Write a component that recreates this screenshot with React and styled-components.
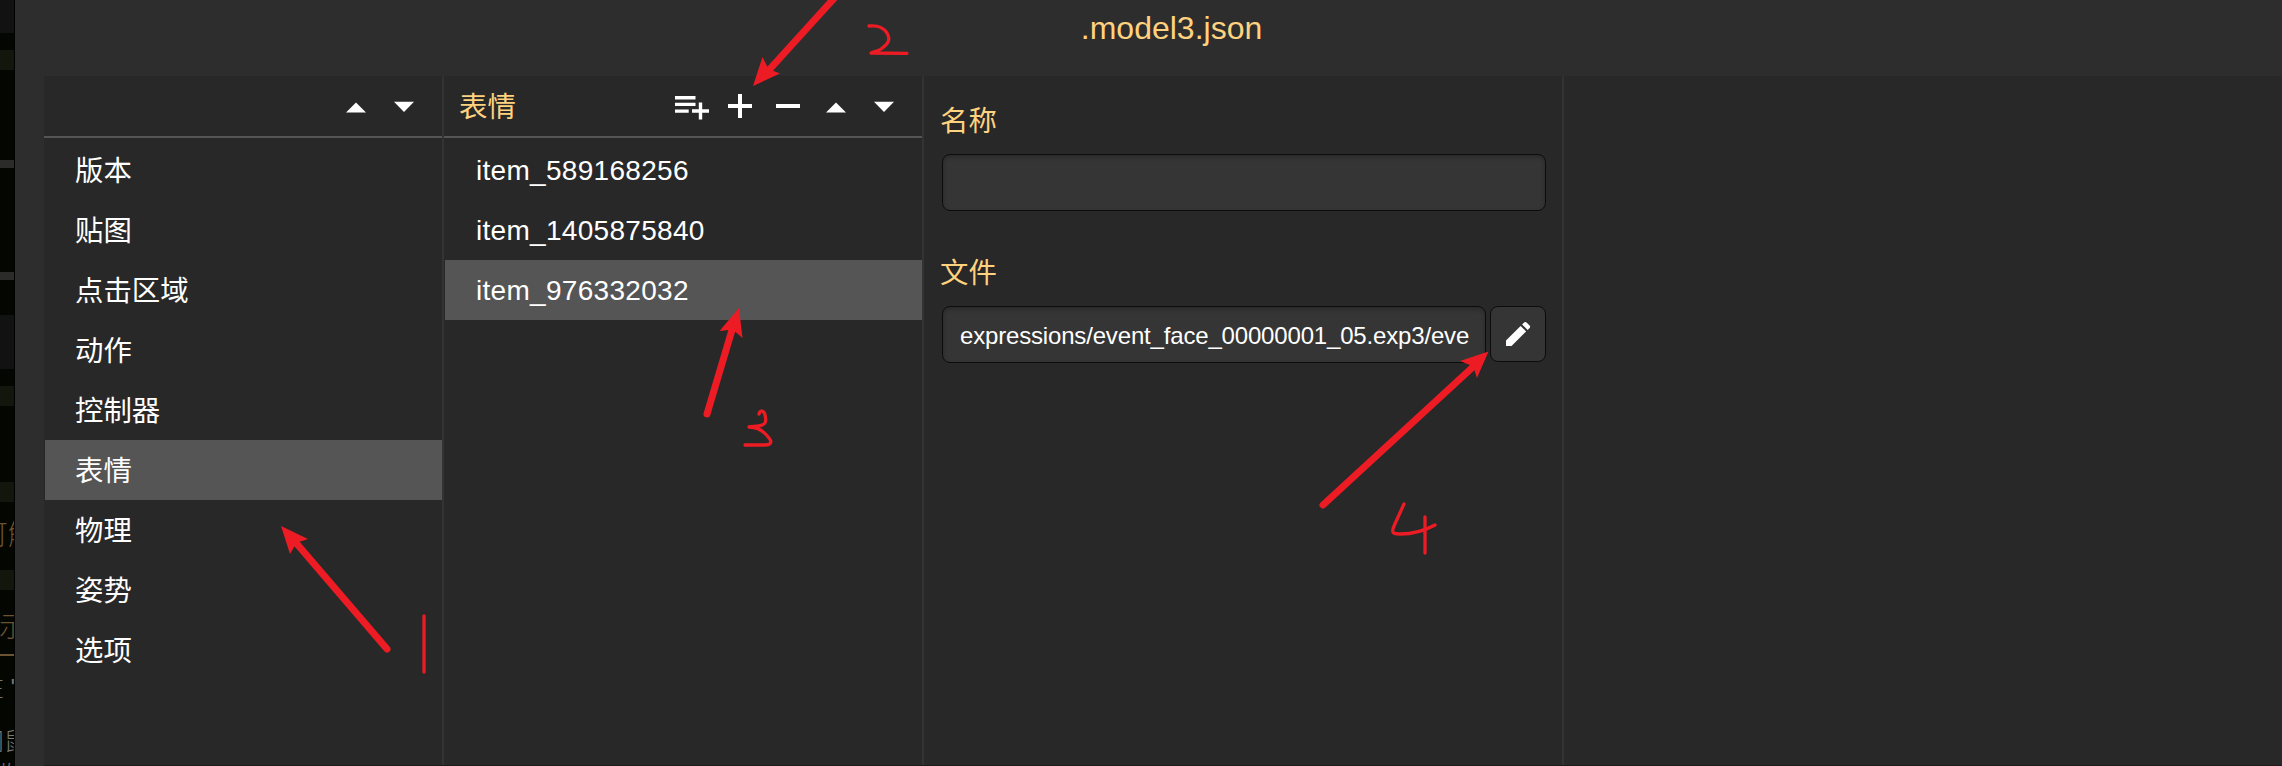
import React from "react";
import styled, { createGlobalStyle } from "styled-components";

const GlobalStyle = createGlobalStyle`
  *, *::before, *::after { box-sizing: border-box; }
  body {
    margin: 0;
    background: #040602;
    font-family: "Liberation Sans", "Noto Sans CJK SC", sans-serif;
    font-size: 28px;
    color: #fff;
  }
`;

const Screen = styled.div`
  position: relative;
  display: flex;
  height: 766px;
  overflow: hidden;
`;

const Backdrop = styled.div`
  flex: none;
  width: 15px;
  overflow: hidden;
  background: #040602;
  border-right: 1px solid #000;
`;

const Band = styled.div`
  height: ${(p) => p.$h}px;
  background: ${(p) => p.$bg || "transparent"};
`;

const Clipped = styled.div`
  height: ${(p) => p.$h}px;
  line-height: ${(p) => p.$h}px;
  margin-left: ${(p) => p.$shift}px;
  font-size: ${(p) => p.$size || 28}px;
  font-weight: 300;
  white-space: pre;
  color: ${(p) => p.$color};
`;

const Dialog = styled.div`
  flex: 1;
  min-width: 0;
  display: flex;
  flex-direction: column;
  background: #2d2d2d;
`;

const DialogTitle = styled.header`
  flex: none;
  height: 76px;
  padding-top: 10px;
  padding-left: 46px;
  line-height: 37px;
  font-size: 32px;
  text-align: center;
  color: #ffd27f;
`;

const Panels = styled.main`
  flex: 1;
  display: flex;
  margin-left: 29px;
  background: #282828;
  border-bottom: 1px solid #1f191b;
`;

const Column = styled.section`
  flex: none;
  width: ${(p) => p.$w}px;
  border-right: 2px solid #333;
`;

const ColumnHeader = styled.div`
  display: flex;
  align-items: center;
  height: 62px;
  padding: 0 14px 0 15px;
  border-bottom: 2px solid #555;
`;

const ColumnTitle = styled.div`
  flex: 1;
  padding-bottom: 4px;
  font-size: 28.4px;
  color: #ffd27f;
`;

const ToolButton = styled.button`
  display: block;
  width: 48px;
  height: 48px;
  padding: 0;
  border: 0;
  background: none;
  color: #fff;
  svg { display: block; }
`;

const List = styled.ul`
  list-style: none;
  margin: 0;
  padding: 2px 0 0 1px;
`;

const Row = styled.li`
  height: 60px;
  padding-left: ${(p) => (p.$latin ? 31 : 30)}px;
  padding-top: 1px;
  line-height: 60px;
  font-size: ${(p) => (p.$latin ? 28 : 28.4)}px;
  letter-spacing: ${(p) => (p.$latin ? 0.3 : 0)}px;
  background: ${(p) => (p.$active ? "#555" : "transparent")};
`;

const Form = styled.div`
  padding: 24px 16px 0 18px;
`;

const Label = styled.label`
  display: block;
  height: 40px;
  padding-top: 1px;
  line-height: 40px;
  margin: 0 0 14px -2px;
  font-size: 28.4px;
  color: #ffd27f;
`;

const Field = styled.div`
  display: flex;
  align-items: flex-start;
  gap: 4px;
  margin-bottom: 41px;
`;

const Input = styled.input`
  flex: 1;
  min-width: 0;
  height: 57px;
  padding: 2px 16px 0 17px;
  border: 1px solid #0c0c0c;
  border-radius: 8px;
  background: #353535;
  box-shadow: inset 0 2px 4px rgba(0, 0, 0, 0.25);
  font: 24px "Liberation Sans", sans-serif;
  letter-spacing: -0.17px;
  color: #fff;
  outline: none;
`;

const EditButton = styled.button`
  display: grid;
  place-items: center;
  width: 56px;
  height: 56px;
  padding: 0;
  border: 1px solid #0c0c0c;
  border-radius: 8px;
  background: #353535;
  color: #fff;
`;

const Annotations = styled.svg`
  position: absolute;
  inset: 0;
  pointer-events: none;
`;

const ICONS = {
  addList: "M7 14h20.5v3.4H7zM7 20.7h20.5v3.4H7zM7 27.4h13.7v3.4H7zM30.8 20.4h3.4v6.9H41v3.4h-6.8v6.7h-3.4v-6.7H24v-3.4h6.8z",
  add: "M22 12h4v10h10v4H26v10h-4V26H12v-4h10z",
  remove: "M12 22h24v4H12z",
  up: "M14 30.5L24 20.5L34 30.5z",
  down: "M14 19.8H34L24 30z",
};

function Tool({ name, label }) {
  return (
    <ToolButton aria-label={label}>
      <svg width="48" height="48" viewBox="0 0 48 48" fill="currentColor">
        <path d={ICONS[name]} />
      </svg>
    </ToolButton>
  );
}

const CATEGORIES = ["版本", "贴图", "点击区域", "动作", "控制器", "表情", "物理", "姿势", "选项"];
const ITEMS = ["item_589168256", "item_1405875840", "item_976332032"];

export default function App() {
  return (
    <>
      <GlobalStyle />
      <Screen>
        <Backdrop>
          <Band $h={33} $bg="#121212" />
          <Band $h={17} />
          <Band $h={20} $bg="#12160c" />
          <Band $h={90} />
          <Band $h={8} $bg="#2b2b29" />
          <Band $h={104} />
          <Band $h={8} $bg="#2b2b29" />
          <Band $h={35} />
          <Band $h={54} $bg="#121212" />
          <Band $h={17} />
          <Band $h={20} $bg="#12160c" />
          <Band $h={76} />
          <Band $h={20} $bg="#12160c" />
          <Band $h={14} />
          <Clipped $h={40} $shift={-20} $color="#6b5231">可解</Clipped>
          <Band $h={14} />
          <Band $h={20} $bg="#12160c" />
          <Band $h={18} />
          <Clipped $h={40} $shift={-1} $color="#6b5231">示</Clipped>
          <Band $h={6} />
          <Band $h={2} $bg="#6b5231" />
          <Band $h={14} />
          <Clipped $h={36} $size={24} $shift={-20} $color="#777">在 "</Clipped>
          <Band $h={18} />
          <Clipped $h={36} $size={24} $shift={-20} $color="#777">间鼠</Clipped>
          <Clipped $h={30} $size={24} $shift={-5} $color="#777">收</Clipped>
        </Backdrop>

        <Dialog>
          <DialogTitle>.model3.json</DialogTitle>
          <Panels>
            <Column $w={400}>
              <ColumnHeader>
                <ColumnTitle />
                <Tool name="up" label="上移" />
                <Tool name="down" label="下移" />
              </ColumnHeader>
              <List>
                {CATEGORIES.map((c) => (
                  <Row key={c} $active={c === "表情"}>{c}</Row>
                ))}
              </List>
            </Column>

            <Column $w={480}>
              <ColumnHeader>
                <ColumnTitle>表情</ColumnTitle>
                <Tool name="addList" label="批量添加" />
                <Tool name="add" label="添加" />
                <Tool name="remove" label="删除" />
                <Tool name="up" label="上移" />
                <Tool name="down" label="下移" />
              </ColumnHeader>
              <List>
                {ITEMS.map((c, i) => (
                  <Row key={c} $active={i === 2} $latin>{c}</Row>
                ))}
              </List>
            </Column>

            <Column $w={640}>
              <Form>
                <Label>名称</Label>
                <Field>
                  <Input readOnly value="" />
                </Field>
                <Label>文件</Label>
                <Field>
                  <Input readOnly value="expressions/event_face_00000001_05.exp3/eve" />
                  <EditButton aria-label="编辑">
                    <svg width="32" height="32" viewBox="0 0 32 32" fill="currentColor">
                      <path d="M4 28v-5.500L18.600 7.900l5.500 5.500L9.500 28zM20.100 6.400l2-2c.7-.7 1.700-.7 2.400 0l3.100 3.100c.7.7.7 1.700 0 2.400l-2 2z" />
                    </svg>
                  </EditButton>
                </Field>
              </Form>
            </Column>
          </Panels>
        </Dialog>

        <Annotations width="2282" height="766" viewBox="0 0 2282 766" fill="none" stroke="#ed1c24" strokeLinecap="round" strokeLinejoin="round">
          <g strokeWidth="7">
            <path d="M387 649L297 544" />
            <path d="M838 -6L769 70" />
            <path d="M707 414L732 330" />
            <path d="M1323 505L1474 366" />
          </g>
          <g fill="#ed1c24" stroke="none">
            <path d="M281 526L308 539L299 542L294 547L290 554Z" />
            <path d="M753 86L762.5 57L767 66L771 70L780 73.500Z" />
            <path d="M739 308L742.500 338L735 331.500L729 330L719.500 331Z" />
            <path d="M1488.500 351.500L1460 361L1470 365L1474 369L1477 378Z" />
          </g>
          <g strokeWidth="3.3">
            <path d="M424 616V672" />
            <path d="M869 26C878 25 883 27 887 33C891 40 888 44 881 49C878 51 873 52 871 53L907 53.300" />
            <path d="M759 414C760 410 764 410 765 415C767 423 765 425 758 426L749 427C758 427 764 431 769 438C773 443 770 445 764 445H745" />
            <path d="M1404 504L1394 526C1391 533 1393 534 1400 534C1413 534 1424 531 1435 525M1425 517V553" />
          </g>
        </Annotations>
      </Screen>
    </>
  );
}
